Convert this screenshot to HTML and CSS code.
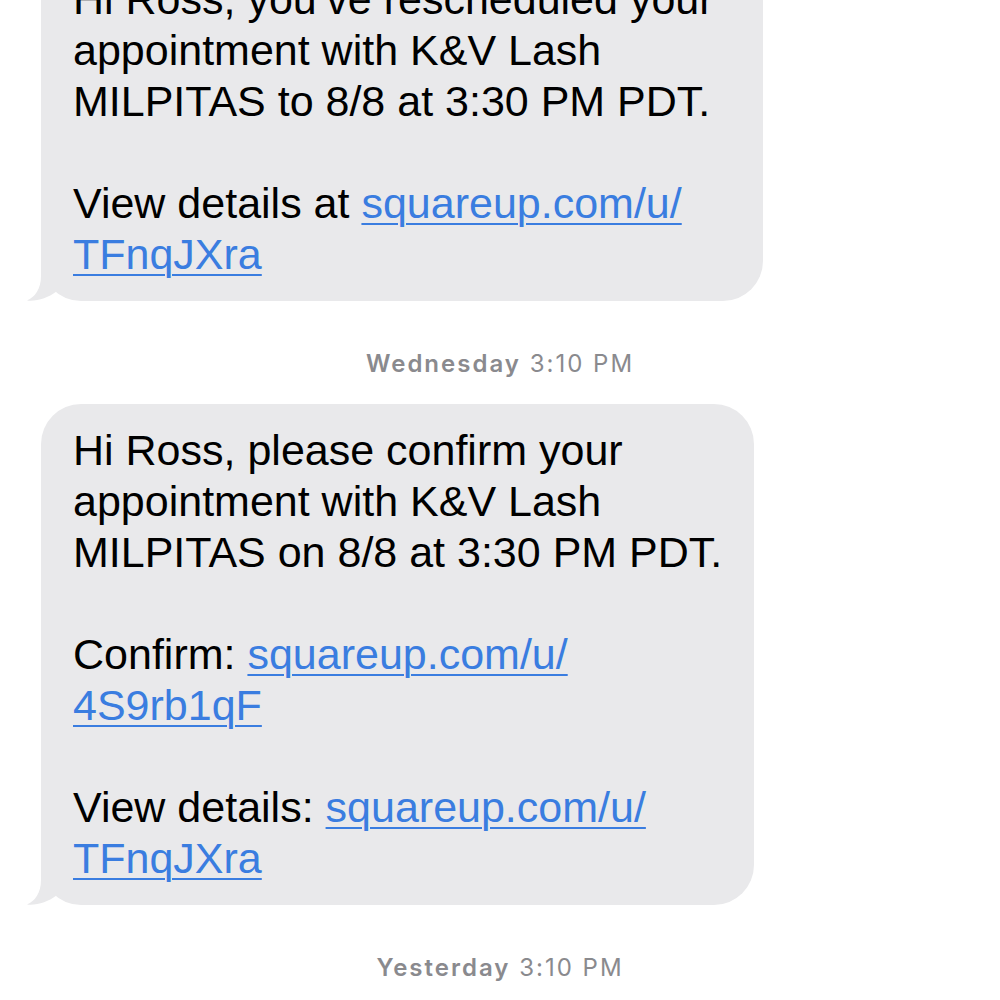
FILE: index.html
```html
<!DOCTYPE html>
<html lang="en">
<head>
<meta charset="UTF-8">
<meta name="viewport" content="width=device-width, initial-scale=1.0">
<title>Messages</title>
<link rel="stylesheet" href="styles.css">
</head>
<body>
    <div class="thread">
        <div class="bubble first">
            <p>Hi Ross, you’ve rescheduled your<br>appointment with K&amp;V Lash<br>MILPITAS to 8/8 at 3:30 PM PDT.</p>
            <p>View details at <a href="#">squareup.com/u/<br>TFnqJXra</a></p>
            <svg class="tail" width="40" height="50" viewBox="0 0 40 50">
                <path d="M14,0 L14,25 C14,38 8,46 0,49.5 C10,50.5 21,47 30,40 L30,0 Z"/>
            </svg>
        </div>

        <div class="stamp"><b>Wednesday</b> 3:10 PM</div>

        <div class="bubble">
            <p>Hi Ross, please confirm your<br>appointment with K&amp;V Lash<br>MILPITAS on 8/8 at 3:30 PM PDT.</p>
            <p>Confirm: <a href="#">squareup.com/u/<br>4S9rb1qF</a></p>
            <p>View details: <a href="#">squareup.com/u/<br>TFnqJXra</a></p>
            <svg class="tail" width="40" height="50" viewBox="0 0 40 50">
                <path d="M14,0 L14,25 C14,38 8,46 0,49.5 C10,50.5 21,47 30,40 L30,0 Z"/>
            </svg>
        </div>

        <div class="stamp"><b>Yesterday</b> 3:10 PM</div>
    </div>
</body>
</html>
```

FILE: styles.css
```css
body {
    margin: 0;
    padding: 0;
    background-color: #fff;
    font-family: 'Liberation Sans', Arial, sans-serif;
    overflow: hidden;
}
.thread {
    display: flex;
    flex-direction: column;
    align-items: flex-start;
    padding: 0 41px;
}
.bubble {
    position: relative;
    background-color: #e9e9eb;
    border-radius: 40px;
    padding: 21px 32px;
    font-size: 43px;
    line-height: 51px;
    color: #000;
}
.bubble.first {
    margin-top: -47px;
    padding-right: 49px;
}
.bubble p {
    margin: 0;
}
.bubble p + p {
    margin-top: 51px;
}
.bubble a {
    color: #3a7de0;
    text-decoration: underline;
    text-decoration-thickness: 2px;
    text-underline-offset: 5px;
}
.tail {
    position: absolute;
    left: -14px;
    bottom: 0;
}
.tail path {
    fill: #e9e9eb;
}
.stamp {
    align-self: center;
    margin: 48px 0 25px;
    font-family: Inter, 'Liberation Sans', sans-serif;
    font-size: 24px;
    line-height: 30px;
    letter-spacing: 2px;
    color: #8a8a8e;
}
.stamp b {
    font-weight: 600;
}
```
